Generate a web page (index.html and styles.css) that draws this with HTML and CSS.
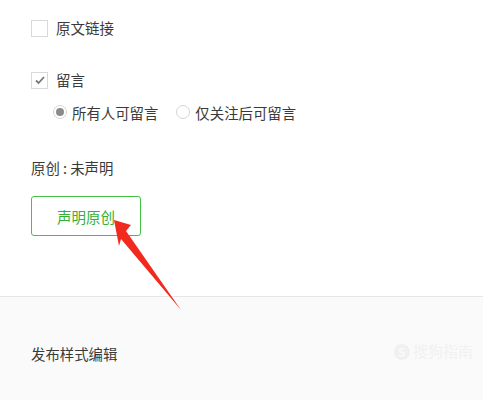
FILE: index.html
```html
<!DOCTYPE html>
<html lang="zh-CN">
<head>
    <meta charset="UTF-8">
    <title>发布设置</title>
    <link rel="stylesheet" href="styles.css">
</head>
<body>
<div class="page">
    <div class="settings">
        <label class="check-row row-link">
            <span class="checkbox"></span>
            <span>原文链接</span>
        </label>
        <label class="check-row row-comment">
            <span class="checkbox checked">
                <svg width="12" height="10" viewBox="0 0 12 10"><path d="M2 5.5 L4.6 8 L10 2" fill="none" stroke="#777" stroke-width="1.8"/></svg>
            </span>
            <span>留言</span>
        </label>
        <div class="radio-group">
            <label class="radio-item"><span class="radio checked"></span>所有人可留言</label>
            <label class="radio-item"><span class="radio"></span>仅关注后可留言</label>
        </div>
        <div class="original">原创 : 未声明</div>
        <button class="btn-declare">声明原创</button>
    </div>
    <div class="footer">
        <span class="footer-title">发布样式编辑</span>
        <div class="watermark"><b>S</b> 搜狗指南</div>
    </div>
    <!--红色箭头-->
    <svg class="arrow" width="500" height="400" viewBox="0 0 500 400">
        <polygon points="114,220 131,225 126,231 181,310 121,239 119,246" fill="#f22a1e"/>
    </svg>
</div>
</body>
</html>
```

FILE: styles.css
```css
* {
    margin: 0;
    padding: 0
}

body {
    background-color: #fff;
    font-family: "Noto Sans CJK SC", "Liberation Sans", sans-serif;
    color: #3a3a3a;
    font-size: 14.4px;
}

.page {
    width: 500px;
    height: 400px;
    position: relative;
    overflow: hidden;
}

.settings {
    height: 296px;
    padding: 19px 0 0 31px;
    box-sizing: border-box;
}

.check-row {
    display: flex;
    align-items: center;
    gap: 8px;
    height: 18px;
    line-height: 18px;
    font-size: 14.5px;
}

.row-comment {
    margin-top: 34px;
}

.checkbox {
    width: 15px;
    height: 15px;
    border: 1px solid #d9d9d9;
    display: flex;
    align-items: center;
    justify-content: center;
}

.radio-group {
    display: flex;
    gap: 18px;
    margin: 14px 0 0 22px;
    height: 18px;
}

.radio-item {
    display: flex;
    align-items: center;
    gap: 5px;
}

.radio {
    width: 12px;
    height: 12px;
    border: 1px solid #d5d5d5;
    border-radius: 50%;
    position: relative;
}

.radio.checked::after {
    content: "";
    position: absolute;
    left: 2px;
    top: 2px;
    width: 8px;
    height: 8px;
    border-radius: 50%;
    background-color: #8a8a8a;
}

.original {
    margin-top: 38px;
    line-height: 18px;
}

.btn-declare {
    margin-top: 19px;
    width: 110px;
    height: 40px;
    border: 1px solid #44c244;
    border-radius: 3px;
    background-color: #fff;
    color: #35b035;
    font-family: inherit;
    font-size: 14.5px;
}

.footer {
    width: 483px;
    height: 104px;
    background-color: #fafafa;
    border-top: 1px solid #e6e6e6;
    display: flex;
    align-items: center;
    justify-content: space-between;
    padding: 0 10px 0 31px;
    box-sizing: border-box;
}

.footer-title {
    margin-top: 10px;
}

.watermark {
    color: #f1f1f1;
    font-size: 15px;
    margin-top: 4px;
}

.watermark b {
    display: inline-block;
    width: 16px;
    height: 16px;
    line-height: 16px;
    border-radius: 50%;
    background-color: #f0f0f0;
    color: #fafafa;
    text-align: center;
    font-size: 12px;
}

.arrow {
    position: absolute;
    left: 0;
    top: 0;
    pointer-events: none;
}
```
